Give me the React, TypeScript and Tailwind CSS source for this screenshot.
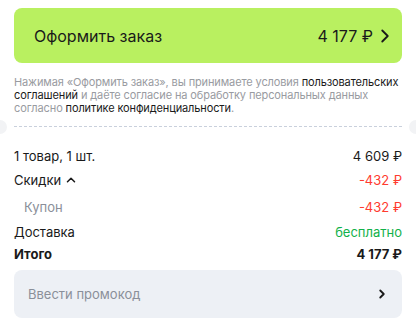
import { ChevronRight, ChevronUp } from 'lucide-react';

function Row({ label, value, className = '', labelClass = '', valueClass = '' }: { label: React.ReactNode; value: string; className?: string; labelClass?: string; valueClass?: string }) {
  return (
    <div className={`flex items-center justify-between ${className}`}>
      <div className={labelClass}>{label}</div>
      <div className={valueClass}>{value}</div>
    </div>
  );
}

export default function App() {
  return (
    <div className="w-[416px] h-[332px] bg-white overflow-hidden relative text-[#1a1a1a]" style={{ fontFamily: 'Inter, "Noto Sans", sans-serif' }}>
      <div className="px-[14px] pt-[8px]">
        {/* Checkout button */}
        <button className="w-full h-[55px] rounded-[8px] bg-[#b9f060] flex items-center justify-between pl-[20px] pr-[6px] text-[16px] text-[#1a1a1a]">
          <span>Оформить заказ</span>
          <span className="flex items-center gap-[1px]">
            <span>4 177 ₽</span>
            <ChevronRight className="w-[22px] h-[22px]" strokeWidth={2} />
          </span>
        </button>

        {/* Terms */}
        <p className="mt-[13px] whitespace-nowrap text-[11px] leading-[13px] tracking-[-0.12px] text-[#999ba1]">
          Нажимая «Оформить заказ», вы принимаете условия <span className="text-[#1a1a1a]">пользовательских</span>
          <br />
          <span className="text-[#1a1a1a]">соглашений</span> и даёте согласие на обработку персональных данных
          <br />
          согласно <span className="text-[#1a1a1a]">политике конфиденциальности</span>.
        </p>
      </div>

      {/* Dashed separator with ticket cut-outs */}
      <div className="relative h-[14px] mt-[5px]">
        <div className="absolute left-[-7px] top-0 w-[14px] h-[14px] rounded-full bg-[#f2f3f5]" />
        <div className="absolute right-[-7px] top-0 w-[14px] h-[14px] rounded-full bg-[#f2f3f5]" />
        <div className="mx-[14px] pt-[6px] border-b border-dashed border-[#c9d0dc]" />
      </div>

      <div className="px-[14px] text-[13px] leading-[16px]">
        <Row className="mt-[14px]" label="1 товар, 1 шт." value="4 609 ₽" />
        <Row
          className="mt-[8px]"
          label={
            <span className="flex items-center gap-[3px]">
              Скидки <ChevronUp className="w-[14px] h-[14px]" strokeWidth={2.6} />
            </span>
          }
          value="-432 ₽"
          valueClass="text-[#ff3b30]"
        />
        <Row className="mt-[11px]" label="Купон" labelClass="pl-[10px] text-[#8a8f99]" value="-432 ₽" valueClass="text-[#ff3b30]" />
        <Row className="mt-[9px]" label="Доставка" value="бесплатно" valueClass="text-[#12b14a]" />
        <Row className="mt-[6px] font-bold" label="Итого" value="4 177 ₽" />

        {/* Promo */}
        <div className="mt-[8px] h-[48px] rounded-[8px] bg-[#edf0f5] flex items-center justify-between pl-[14px] pr-[13px]">
          <span className="text-[13px] text-[#8a8f99]">Ввести промокод</span>
          <ChevronRight className="w-[14px] h-[14px] text-[#1a1a1a]" strokeWidth={3.2} />
        </div>
      </div>
    </div>
  );
}
